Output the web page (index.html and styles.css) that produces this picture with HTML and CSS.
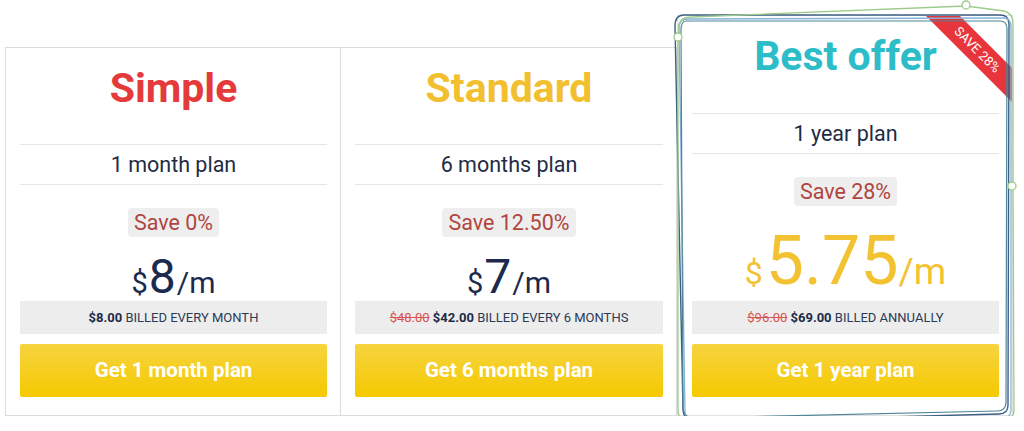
FILE: index.html
```html
<!DOCTYPE html>
<html lang="en">
<head>
<meta charset="utf-8">
<title>Pricing</title>
<link rel="stylesheet" href="styles.css">
</head>
<body>
<div class="pricing">
  <div class="card">
    <h2 class="title title-red">Simple</h2>
    <div class="plan">1 month plan</div>
    <div class="save-row"><span class="save">Save 0%</span></div>
    <div class="price"><span class="cur">$</span><span class="amount">8</span><span class="per">/m</span></div>
    <div class="billing"><b>$8.00</b> BILLED EVERY MONTH</div>
    <a class="btn" href="#">Get 1 month plan</a>
  </div>
  <div class="card card-mid">
    <h2 class="title title-yellow">Standard</h2>
    <div class="plan">6 months plan</div>
    <div class="save-row"><span class="save">Save 12.50%</span></div>
    <div class="price"><span class="cur">$</span><span class="amount">7</span><span class="per">/m</span></div>
    <div class="billing"><s>$48.00</s> <b>$42.00</b> BILLED EVERY 6 MONTHS</div>
    <a class="btn" href="#">Get 6 months plan</a>
  </div>
  <div class="card card-best">
    <div class="ribbon-wrap"><span class="ribbon">SAVE 28%</span></div>
    <h2 class="title title-teal">Best offer</h2>
    <div class="plan">1 year plan</div>
    <div class="save-row"><span class="save">Save 28%</span></div>
    <div class="price price-big"><span class="cur">$</span><span class="amount">5.75</span><span class="per">/m</span></div>
    <div class="billing"><s>$96.00</s> <b>$69.00</b> BILLED ANNUALLY</div>
    <a class="btn" href="#">Get 1 year plan</a>
    <svg class="sketch" viewBox="670 0 354 431" width="354" height="431" aria-hidden="true">
      <path d="M684,15 L1000,15 Q1009,15 1009,24 L1008,405 Q1008,414 999,414 L700,422 Q684,423 683,410 L675,26 Q675,15 684,15 Z" fill="none" stroke="#3e5f84" stroke-width="1.4"/>
      <path d="M688,19 L1003,18 Q1011,18 1011,27 L1011,410 Q1011,418 1002,418 L697,424 Q686,424 685,413 L679,28 Q679,19 688,19 Z" fill="none" stroke="#86b4d8" stroke-width="1.3"/>
      <path d="M686,21 L1000,21 Q1007,21 1007,29 L1006,402 Q1006,411 997,411 L694,418 Q684,418 683,408 L681,31 Q681,21 686,21 Z" fill="none" stroke="#4f8597" stroke-width="1.2"/>
      <path d="M678,37 L679,24 Q681,17 692,17 L966,6 L1004,11 Q1013,13 1013,24 L1013,186 L1014,410 Q1014,419 1005,419 L690,421 Q678,421 678,410 Z" fill="none" stroke="#9ccb8b" stroke-width="1.3"/>
      <circle cx="678" cy="37" r="4" fill="#fff" stroke="#9ccb8b" stroke-width="1.3"/>
      <circle cx="966" cy="5" r="4" fill="#fff" stroke="#9ccb8b" stroke-width="1.3"/>
      <circle cx="1012" cy="186" r="4" fill="#fff" stroke="#9ccb8b" stroke-width="1.3"/>
    </svg>
  </div>
</div>
</body>
</html>
```
FILE: styles.css
```css
* { box-sizing: border-box; }
html, body { margin: 0; padding: 0; background: #fff; }
body { font-family: Roboto, "Liberation Sans", Arial, sans-serif; color: #1c2b48; }

.pricing {
  display: flex;
  align-items: flex-end;
  padding: 15px 0 0 5px;
}

.card {
  position: relative;
  width: 336px;
  flex: 0 0 336px;
  border: 1px solid #dcdcdc;
  background: #fff;
  padding: 16px 13px 18px 14px;
  display: flex;
  flex-direction: column;
  text-align: center;
}
.card-mid { margin-left: -1px; width: 337px; flex-basis: 337px; }
.card-best { border-color: #e2e2e2; }

.title {
  margin: 0 0 32px;
  font-size: 41px;
  line-height: 48px;
  font-weight: 700;
}
.card-best .title { margin-bottom: 33px; }
.title-red { color: #e53a3a; }
.title-yellow { color: #f2bf2f; }
.title-teal { color: #2dbdc9; }

.plan {
  height: 41px;
  line-height: 39px;
  border-top: 1px solid #e6e6e6;
  border-bottom: 1px solid #e6e6e6;
  font-size: 21.5px;
  color: #1f2c45;
}

.save-row { margin-top: 23px; height: 29px; }
.save {
  display: inline-block;
  height: 29px;
  line-height: 29px;
  padding: 0 6px;
  background: #eeeeee;
  border-radius: 4px;
  color: #b0453f;
  font-size: 21.5px;
}

.price {
  margin-top: 16px;
  line-height: 48px;
  height: 48px;
  color: #1b2a4d;
  white-space: nowrap;
}
.price .cur { font-size: 29px; }
.price .amount { font-size: 48px; margin: 0 1px 0 1px; }
.price .per { font-size: 30px; }

.price-big {
  margin-top: 15px;
  line-height: 80px;
  height: 80px;
  color: #f3c233;
}
.price-big .cur { font-size: 32px; }
.price-big .amount { font-size: 68px; margin: 0 0 0 3px; }
.price-big .per { font-size: 37px; }

.billing {
  height: 33px;
  line-height: 33px;
  background: #ededed;
  font-size: 13px;
  color: #2b3a55;
}
.billing b { color: #1c2b48; font-weight: 700; }
.billing s { color: #d9534f; text-decoration: line-through; }

.btn {
  display: block;
  margin-top: 10px;
  height: 53px;
  line-height: 53px;
  border-radius: 2px;
  background: linear-gradient(#f6d440, #f5c900);
  color: #fff;
  font-size: 20.5px;
  font-weight: 700;
  text-decoration: none;
}

.ribbon-wrap {
  position: absolute;
  top: 0;
  right: 0;
  width: 100px;
  height: 100px;
  overflow: hidden;
}
.ribbon {
  position: absolute;
  left: -10px;
  top: 22px;
  width: 150px;
  height: 24px;
  line-height: 24px;
  background: #e8353b;
  color: #fff;
  font-size: 13px;
  text-align: center;
  transform: rotate(45deg);
}

.sketch {
  position: absolute;
  left: -8px;
  top: -16px;
  overflow: visible;
  pointer-events: none;
}
```
